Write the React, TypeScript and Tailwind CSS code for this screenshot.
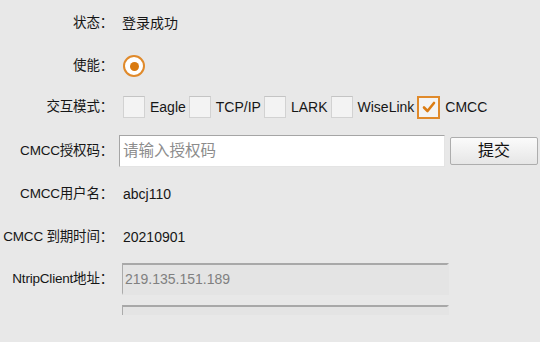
import React from 'react'

const font = { fontFamily: '"Liberation Sans", Arial, "Noto Sans CJK SC", sans-serif' }

const modes = ['Eagle', 'TCP/IP', 'LARK', 'WiseLink', 'CMCC']

function Label({ children }: { children: React.ReactNode }) {
  return <div className="w-[113px] shrink-0 text-right whitespace-nowrap text-[13.5px] tracking-[-0.2px]">{children}</div>
}

function CheckBox({ checked }: { checked?: boolean }) {
  if (checked) {
    return (
      <div className="w-[23px] h-[23px] border-2 border-[#e08a2b] bg-[#f4f4f4] flex items-center justify-center">
        <svg width="14" height="12" viewBox="0 0 14 12">
          <path d="M2 6.5 L5.5 10 L12 2" fill="none" stroke="#dc7d14" strokeWidth="2.6" strokeLinecap="round" strokeLinejoin="round" />
        </svg>
      </div>
    )
  }
  return <div className="w-[22px] h-[22px] border border-[#d2d2d2] border-t-[#c4c4c4] bg-[#f3f3f3]" />
}

export default function App() {
  return (
    <div className="w-[540px] h-[342px] bg-[#e8e8e8] text-[#161616] text-[14px] overflow-hidden" style={font}>
      {/* 状态 */}
      <div className="flex items-center h-[46px]">
        <Label>状态：</Label>
        <span className="ml-[9px]">登录成功</span>
      </div>

      {/* 使能 */}
      <div className="flex items-center h-[40px]">
        <Label>使能：</Label>
        <div className="ml-[10px] w-[22px] h-[22px] rounded-full border-2 border-[#e08a2b] bg-white flex items-center justify-center">
          <div className="w-[9px] h-[9px] rounded-full bg-[#d97a10]" />
        </div>
      </div>

      {/* 交互模式 */}
      <div className="flex items-center h-[42px]">
        <Label>交互模式：</Label>
        <div className="ml-[10px] flex items-center">
          {modes.map((m) => (
            <div key={m} className="flex items-center mr-[3px]">
              <CheckBox checked={m === 'CMCC'} />
              <span className="ml-[5px]">{m}</span>
            </div>
          ))}
        </div>
      </div>

      {/* 授权码 */}
      <div className="flex items-center h-[46px]">
        <Label>CMCC授权码：</Label>
        <div className="ml-[6px] w-[326px] h-[32px] bg-white border border-[#e4e4e4] border-t-[#a5a5a5] border-l-[#a5a5a5] flex items-center px-[3px] text-[15.5px] text-[#8c8c8c]">
          请输入授权码
        </div>
        <button className="ml-[5px] w-[88px] h-[28px] rounded-[2px] border border-[#adadad] bg-gradient-to-b from-[#fbfbfb] to-[#e6e6e6] text-[16px] text-[#111]">
          提交
        </button>
      </div>

      {/* 用户名 */}
      <div className="flex items-center h-[40px]">
        <Label>CMCC用户名：</Label>
        <span className="ml-[10px]">abcj110</span>
      </div>

      {/* 到期时间 */}
      <div className="flex items-center h-[46px]">
        <Label>CMCC 到期时间：</Label>
        <span className="ml-[10px]">20210901</span>
      </div>

      {/* NtripClient */}
      <div className="flex items-center h-[38px]">
        <Label>NtripClient地址：</Label>
        <div className="ml-[9px] w-[327px] h-[32px] bg-[#e4e4e4] border-2 border-[#e4e4e4] border-t-[#a8a8a8] border-l-[#ababab] border-l-[1.5px] flex items-center px-[2px] text-[#808080]">
          219.135.151.189
        </div>
      </div>

      {/* clipped next field */}
      <div className="flex mt-[7px] h-[10px] overflow-hidden">
        <div className="w-[113px] shrink-0" />
        <div className="ml-[9px] w-[327px] h-[32px] bg-[#e4e4e4] border-2 border-[#e4e4e4] border-t-[#a8a8a8] border-l-[#ababab] border-l-[1.5px]" />
      </div>
    </div>
  )
}
